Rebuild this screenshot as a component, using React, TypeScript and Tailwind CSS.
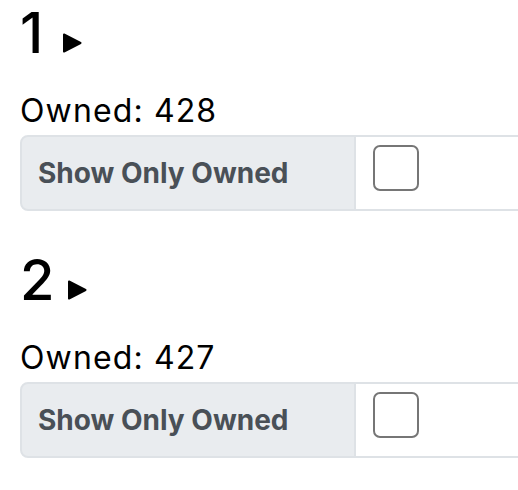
import React from 'react'

const sets = [
  { id: 1, owned: 428 },
  { id: 2, owned: 427 },
]

const Caret = ({ className }: { className: string }) => (
  <svg width="20" height="20" viewBox="0 0 20 20" className={className}>
    <path d="M2 1.5 L18.5 10 L2 18.5 Z" fill="#000" stroke="#000" strokeWidth="2" strokeLinejoin="round" />
  </svg>
)

export default function App() {
  return (
    <div className="w-[518px] h-[490px] overflow-hidden bg-white font-['Inter','Liberation_Sans',sans-serif] text-black">
      <div className="px-[20px] flex flex-col gap-[36px]">
        {sets.map((set) => (
          <section key={set.id}>
            <h3 className="flex items-baseline text-[56px] leading-[67px] font-medium tracking-[0.01em]">
              <span>{set.id}</span>
              <Caret className={set.id === 1 ? 'ml-[18px] mb-[2px]' : 'ml-[12px] mb-[2px]'} />
            </h3>
            <p className="mt-[20px] text-[32px] leading-[48px] tracking-[0.035em]">Owned: {set.owned}</p>
            <div className="flex h-[76px] w-[600px]">
              <label className="flex items-center w-[336px] pl-[16px] bg-[#e9ecef] border-2 border-[#dee2e6] rounded-l-[8px] text-[28px] font-bold text-[#495057]">
                Show Only Owned
              </label>
              <div className="flex-1 bg-white border-2 border-l-0 border-[#dee2e6] pl-[17px] pt-[8px]">
                <div className="w-[46px] h-[46px] border-2 border-[#767676] rounded-[7px] bg-white" />
              </div>
            </div>
          </section>
        ))}
      </div>
    </div>
  )
}
